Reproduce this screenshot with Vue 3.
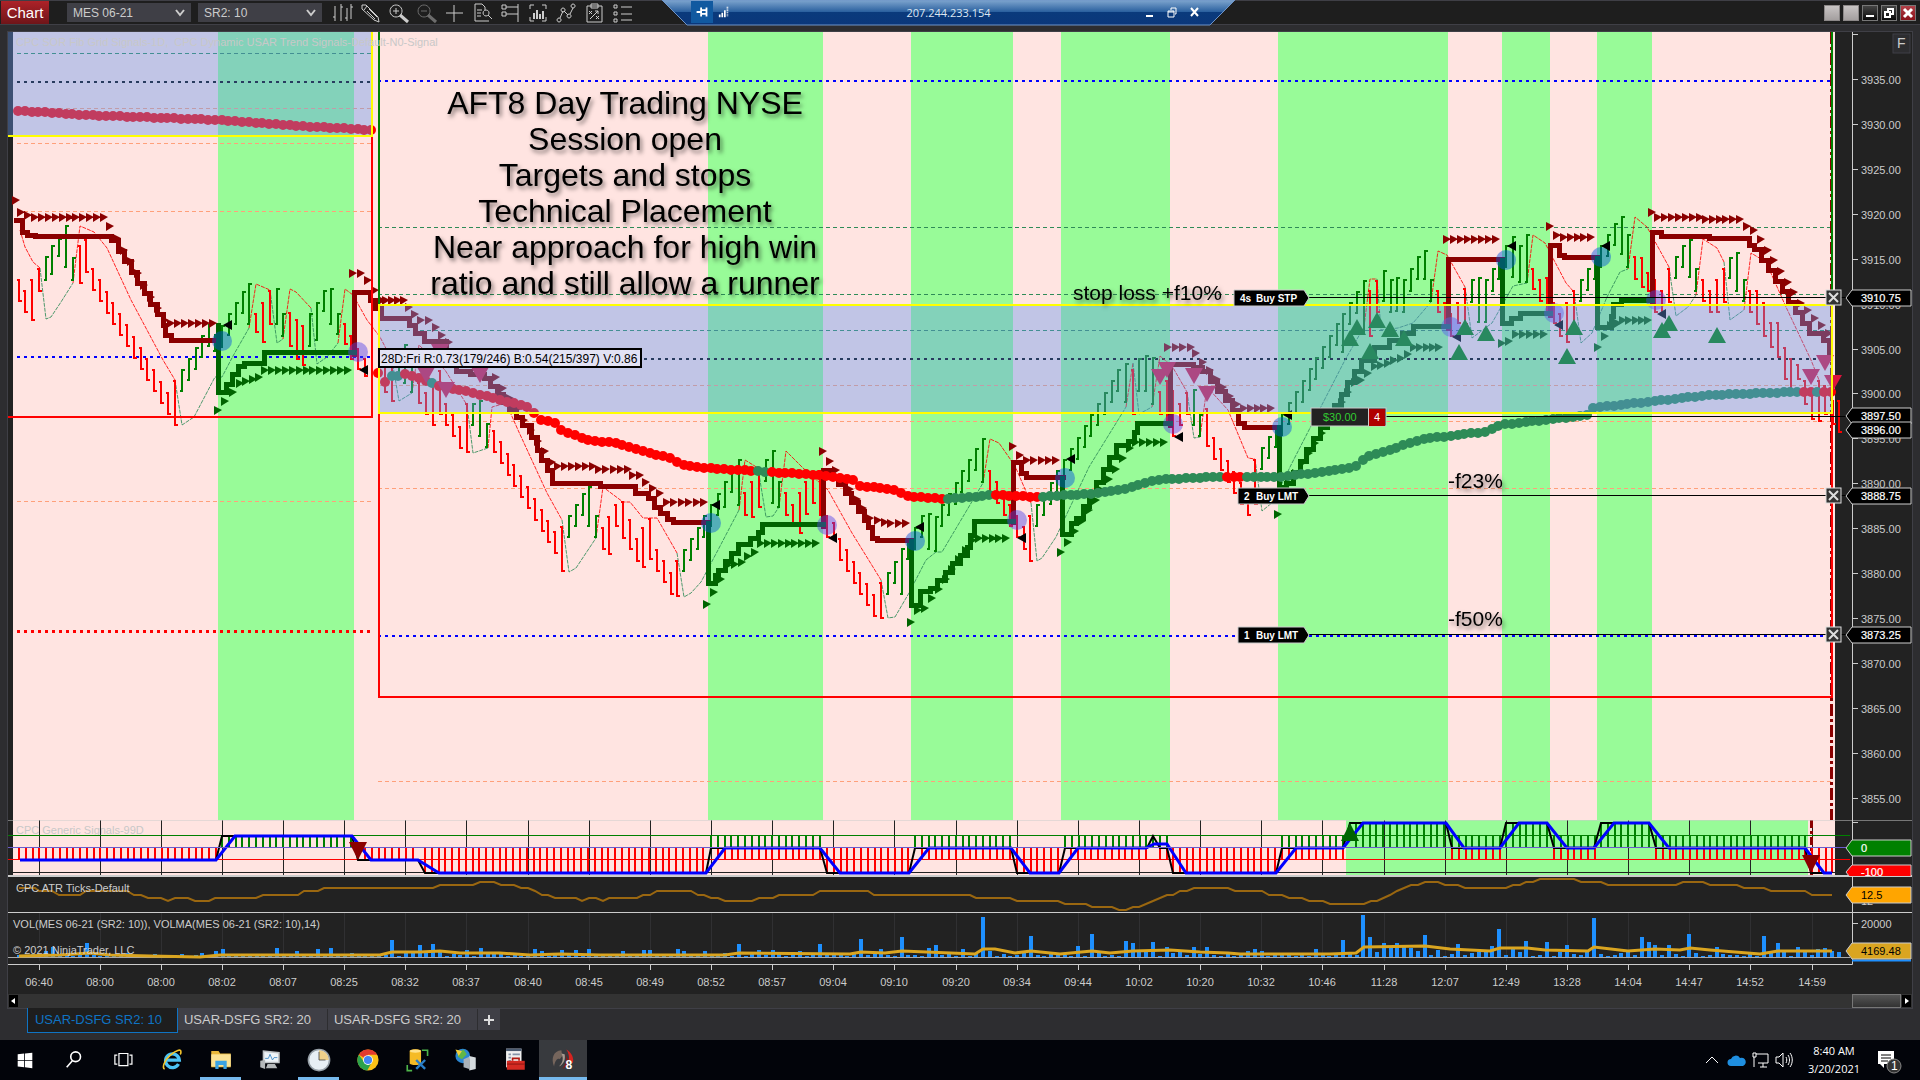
<script setup>
const PITCH = 6.79

const bands = [[218, 354], [708, 823], [911, 1013], [1061, 1170], [1278, 1448], [1502, 1550], [1597, 1652]]

// Single range bars: x, high, low
const redBars = [
  [19, 279, 302], [25, 290, 313], [32, 279, 321], [39, 268, 292], [80, 245, 284], [86, 239, 273], [175, 380, 426],
  [256, 313, 333], [263, 302, 343], [270, 290, 325], [290, 312, 347], [297, 319, 360], [303, 325, 366],
  [345, 323, 345], [351, 335, 360], [358, 348, 370], [365, 358, 377],
  [385, 350, 393], [392, 360, 402], [419, 382, 404], [426, 392, 415], [433, 380, 426], [440, 370, 415], [467, 403, 453], [562, 526, 572],
  [603, 527, 550], [609, 516, 555], [616, 504, 527], [623, 501, 539], [630, 519, 550], [637, 538, 562], [643, 527, 568],
  [650, 518, 560], [677, 560, 597], [745, 492, 516], [752, 481, 518], [759, 470, 508],
  [786, 492, 516], [793, 504, 527], [800, 492, 534], [806, 481, 515], [813, 472, 504], [820, 470, 516], [827, 515, 538], [834, 522, 540],
  [881, 582, 619], [1024, 526, 550], [1030, 515, 562], [1133, 369, 415], [1160, 391, 415], [1167, 380, 426], [1173, 390, 437],
  [1180, 403, 426], [1187, 392, 415], [1207, 408, 447], [1255, 459, 505],
  [1370, 290, 337], [1377, 280, 313], [1438, 290, 313], [1445, 302, 324], [1451, 313, 337], [1458, 302, 324], [1465, 288, 325],
  [1533, 268, 290], [1540, 279, 302], [1547, 277, 313], [1554, 302, 324], [1560, 313, 337], [1567, 302, 343], [1574, 290, 326],
  [1635, 256, 280], [1642, 257, 288], [1648, 272, 292], [1655, 279, 313], [1662, 290, 313], [1669, 268, 303],
  [1703, 279, 302], [1710, 290, 313], [1717, 279, 313], [1724, 268, 303], [1750, 290, 313], [1757, 290, 325], [1764, 302, 337],
  [1771, 322, 348], [1778, 322, 358], [1785, 347, 380], [1791, 358, 391], [1798, 364, 380], [1805, 380, 405], [1812, 390, 420],
  [1819, 380, 422], [1825, 385, 415], [1833, 400, 425], [1839, 400, 433]
]
const greenBars = [
  [46, 256, 281], [52, 245, 275], [59, 238, 257], [66, 225, 268], [73, 257, 281], [215, 334, 352], [222, 325, 348], [249, 283, 325],
  [277, 288, 325], [283, 313, 337], [310, 313, 347], [317, 302, 341], [324, 290, 312], [331, 288, 325], [338, 313, 335],
  [399, 350, 378], [405, 344, 384], [412, 360, 393], [473, 403, 426], [480, 400, 437], [487, 423, 448], [589, 486, 527], [596, 515, 538],
  [725, 481, 508], [732, 470, 493], [739, 459, 506], [766, 459, 482], [773, 450, 504], [779, 481, 508],
  [902, 548, 595], [908, 540, 560], [915, 527, 550], [922, 515, 538], [929, 513, 550], [936, 516, 552],
  [983, 438, 483], [1126, 363, 403], [1139, 358, 392], [1146, 355, 392], [1153, 357, 405], [1194, 389, 426], [1200, 414, 437],
  [1343, 313, 353], [1364, 280, 333], [1384, 270, 302], [1391, 279, 313], [1397, 277, 312], [1404, 279, 313], [1411, 268, 292],
  [1418, 256, 280], [1425, 250, 280], [1431, 279, 302], [1472, 279, 303], [1479, 277, 323], [1486, 279, 323], [1493, 268, 292],
  [1499, 257, 280], [1506, 245, 268], [1513, 236, 278], [1520, 245, 283], [1527, 234, 283],
  [1622, 216, 255], [1628, 234, 268], [1690, 239, 278], [1696, 268, 292], [1730, 257, 279], [1737, 252, 292], [1744, 279, 302]
]
// Steady runs: x, first high, bar count, direction
const redRuns = [[93, 268, 12, 1], [446, 403, 3, 1], [494, 430, 10, 1], [657, 549, 3, 1], [840, 538, 6, 1], [990, 470, 5, 1], [1214, 437, 6, 1]]
const greenRuns = [[182, 369, 5, -1], [229, 313, 3, -1], [569, 515, 3, -1], [684, 549, 6, -1], [888, 572, 2, -1], [942, 504, 6, -1],
  [1037, 504, 13, -1], [1262, 447, 12, -1], [1350, 302, 2, -1], [1581, 279, 6, -1], [1676, 256, 2, -1]]

function barPath(list, runs, dir) {
  const all = list.map(b => [...b, dir])
  for (const [x, top, n, d] of runs) {
    for (let k = 0; k < n; k++) {
      const t = Math.round(top + d * 11.25 * k)
      all.push([Math.round(x + PITCH * k), t, t + 23, d])
    }
  }
  return all.map(([x, hi, lo, d]) => {
    const open = d > 0 ? hi + 1 : lo - 1
    const close = d > 0 ? lo - 1 : hi + 1
    return `M${x} ${hi}V${lo}M${x - 2} ${open}h2M${x} ${close}h3`
  }).join('')
}
const redBarPath = barPath(redBars, redRuns, 1)
const greenBarPath = barPath(greenBars, greenRuns, -1)

// Trend steps: drawn horizontally first, then vertically
function steps(pts) {
  let d = `M${pts[0][0]} ${pts[0][1]}`
  for (const [x, y] of pts.slice(1)) d += `H${x}V${y}`
  return d
}
function stair(x0, y0, x1, y1) {
  const n = Math.max(1, Math.round((x1 - x0) / PITCH))
  return Array.from({ length: n + 1 }, (_, k) => [Math.round(x0 + (x1 - x0) * k / n), Math.round(y0 + (y1 - y0) * k / n)])
}
const redSteps = [
  [[16, 220], [22, 232], [27, 235], [35, 236], ...stair(111, 240, 163, 325), [165, 335], [171, 340], [216, 340]],
  [[354, 354], [354, 292], [370, 300], [375, 308], [381, 318], [409, 325], [415, 333], [424, 341], [446, 350], [450, 362], [456, 371], [470, 374],
    ...stair(484, 378, 522, 425), [531, 437], [537, 450], [541, 460], [547, 470], [552, 483], [600, 486], [635, 493], [648, 498], [654, 507], [660, 513], [667, 519], [673, 522], [708, 522]],
  [[823, 526], [823, 470], [832, 477], ...stair(838, 484, 864, 520), [868, 527], [872, 538], [877, 540], [911, 540]],
  [[1013, 522], [1013, 462], [1021, 473], [1026, 477], [1063, 477]],
  [[1170, 425], [1170, 364], [1193, 367], ...stair(1202, 371, 1232, 410), [1238, 423], [1244, 427], [1278, 427]],
  [[1448, 328], [1448, 259], [1502, 259]],
  [[1550, 315], [1550, 245], [1559, 255], [1564, 257], [1597, 257]],
  [[1652, 302], [1652, 232], [1661, 236], [1709, 238], [1749, 245], ...stair(1754, 249, 1809, 333), [1823, 340], [1829, 358]]
].map(steps).join('')
const greenSteps = [
  [[218, 325], [218, 392], [226, 384], [232, 374], [238, 366], [244, 363], [264, 352], [354, 352]],
  [[708, 523], [708, 583], [715, 575], ...stair(718, 570, 738, 544), [750, 538], [758, 532], [762, 524], [823, 524]],
  [[911, 541], [911, 605], [920, 591], ...stair(930, 588, 967, 547), [970, 535], [974, 521], [1013, 521]],
  [[1062, 478], [1062, 534], [1071, 523], ...stair(1076, 518, 1116, 445), [1128, 441], [1134, 432], [1137, 423], [1170, 423]],
  [[1279, 427], [1279, 487], ...stair(1286, 483, 1361, 360), [1374, 347], [1389, 340], [1402, 333], [1413, 326], [1448, 326]],
  [[1502, 260], [1502, 323], [1511, 318], [1520, 313], [1550, 313]],
  [[1597, 258], [1597, 327], [1611, 316], [1613, 304], [1621, 300], [1652, 300]]
].map(steps).join('')

// Arrow trails: x0, y0, x1, y1, sampled once per bar
const redTrail = [
  [15, 200, 15, 200], [20, 212, 27, 215], [34, 217, 103, 217], [109, 226, 164, 320], [170, 323, 212, 323],
  [352, 273, 360, 273], [367, 280, 381, 300], [385, 300, 403, 300], [408, 307, 420, 320], [428, 320, 448, 342], [495, 377, 551, 462],
  [557, 466, 592, 466], [598, 469, 627, 469], [632, 475, 639, 475], [645, 482, 659, 493], [666, 502, 703, 502],
  [822, 451, 869, 518], [877, 520, 884, 522], [890, 523, 905, 523], [1012, 446, 1019, 455], [1026, 460, 1055, 460],
  [1167, 347, 1190, 347], [1195, 353, 1236, 404], [1243, 408, 1270, 408], [1446, 239, 1495, 239], [1549, 226, 1556, 235], [1563, 237, 1590, 237],
  [1651, 212, 1651, 212], [1657, 217, 1699, 217], [1705, 219, 1739, 219], [1746, 226, 1753, 230], [1760, 239, 1800, 303], [1807, 310, 1828, 333]
]
const greenTrail = [
  [217, 410, 239, 383], [245, 381, 258, 377], [264, 370, 347, 370], [706, 604, 720, 579], [727, 565, 741, 562], [747, 556, 754, 552], [760, 543, 815, 543],
  [910, 622, 917, 610], [924, 608, 972, 540], [978, 538, 1005, 538], [1060, 552, 1129, 448], [1135, 442, 1163, 442],
  [1277, 514, 1277, 514], [1288, 483, 1354, 382], [1360, 380, 1374, 366], [1380, 365, 1400, 358], [1407, 354, 1407, 354], [1413, 347, 1438, 347],
  [1501, 343, 1508, 341], [1515, 334, 1543, 334], [1597, 347, 1610, 325], [1617, 323, 1617, 323], [1622, 320, 1647, 320]
]
function trailPath(segs) {
  return segs.map(([x0, y0, x1, y1]) => {
    const n = Math.round((x1 - x0) / PITCH)
    return Array.from({ length: n + 1 }, (_, k) => {
      const f = n ? k / n : 0
      return `M${Math.round(x0 + (x1 - x0) * f) - 3} ${Math.round(y0 + (y1 - y0) * f) - 4}l8 4l-8 5z`
    }).join('')
  }).join('')
}
const redArrows = trailPath(redTrail)
const greenArrows = trailPath(greenTrail)

// Moving average dots
function interpolate(pts, x) {
  for (let i = 1; i < pts.length; i++) {
    if (x <= pts[i][0]) {
      const [a, b] = pts[i - 1]
      const [c, d] = pts[i]
      return b + (d - b) * (x - a) / (c - a)
    }
  }
  return pts[pts.length - 1][1]
}
const maLeft = [[18, 111], [39, 112], [82, 115], [216, 120], [300, 126], [373, 130]]
const maRight = [[378, 373], [385, 382], [392, 376], [399, 376], [406, 374], [426, 381], [440, 386], [469, 392], [529, 407], [541, 420], [555, 423],
  [561, 430], [588, 440], [616, 443], [640, 450], [669, 458], [685, 466], [722, 469], [768, 472], [820, 475], [856, 480], [860, 486], [897, 490],
  [905, 496], [946, 499], [995, 495], [1038, 497], [1089, 494], [1122, 490], [1154, 480], [1211, 477], [1280, 477], [1337, 470], [1358, 466],
  [1364, 458], [1423, 439], [1484, 432], [1500, 425], [1590, 415], [1593, 408], [1647, 402], [1709, 395], [1798, 392], [1834, 392]]
const maGreen = [[391, 401], [430, 436], [754, 769], [944, 994], [1037, 1222], [1244, 1803], [1816, 1822]]
const dots = []
for (let x = 18; x < 376; x += PITCH) dots.push({ x: Math.round(x), y: Math.round(interpolate(maLeft, x)), c: '#ff0000' })
for (let x = 378; x < 1836; x += PITCH) {
  const green = maGreen.some(([a, b]) => x >= a && x <= b)
  dots.push({ x: Math.round(x), y: Math.round(interpolate(maRight, x)), c: green ? '#2e8b57' : '#ff0000' })
}

// Thin stop curves: each starts where the previous one ended
const curves = [
  ['r', 20, 230, 25, 247, 33, 262, 40, 268], ['g', 46, 319, 51, 317, 61, 302, 73, 283], ['r', 80, 226, 94, 232, 107, 248, 131, 300, 163, 360, 175, 380],
  ['g', 182, 425, 194, 417, 204, 398, 215, 377, 222, 377, 233, 356, 249, 328], ['r', 256, 284, 270, 290], ['g', 277, 343, 283, 339],
  ['r', 290, 289, 296, 292, 311, 308], ['g', 317, 364, 327, 357, 338, 343], ['r', 345, 289, 353, 295, 367, 320, 380, 337, 392, 360],
  ['g', 399, 401, 412, 393], ['r', 419, 345, 445, 370, 467, 405], ['g', 473, 453, 488, 448], ['r', 492, 407, 506, 403, 518, 430, 547, 493, 562, 520],
  ['g', 569, 572, 576, 568, 588, 550, 596, 538], ['r', 603, 487, 623, 502, 630, 502, 643, 518, 657, 518, 677, 553],
  ['g', 684, 597, 691, 593, 701, 582, 718, 550, 739, 510], ['r', 745, 460, 758, 468], ['g', 766, 517, 773, 516, 779, 507],
  ['r', 786, 451, 803, 468, 828, 490, 852, 533, 881, 580], ['g', 888, 618, 895, 617, 909, 593, 926, 560, 936, 552, 942, 552, 983, 483],
  ['r', 990, 439, 999, 443, 1015, 466, 1031, 503], ['g', 1037, 561, 1042, 558, 1056, 537, 1089, 467, 1126, 407], ['r', 1133, 363], ['g', 1139, 414, 1152, 407],
  ['r', 1160, 356, 1172, 366, 1187, 392], ['g', 1194, 438, 1200, 437], ['r', 1207, 387, 1228, 410, 1248, 458, 1255, 459],
  ['g', 1262, 511, 1273, 502, 1292, 463, 1345, 360, 1364, 327], ['r', 1370, 279, 1377, 279], ['g', 1381, 330, 1398, 328, 1413, 323, 1431, 302],
  ['r', 1438, 251, 1447, 255, 1465, 287], ['g', 1472, 338, 1492, 323, 1513, 286, 1527, 283], ['r', 1533, 235, 1545, 243, 1566, 283, 1574, 292],
  ['g', 1581, 343, 1592, 333, 1607, 297, 1620, 272, 1628, 269], ['r', 1635, 217, 1647, 227, 1669, 267], ['g', 1676, 316, 1688, 307, 1696, 295],
  ['r', 1703, 239, 1717, 248, 1724, 262], ['g', 1730, 320, 1744, 310], ['r', 1751, 253, 1766, 262, 1786, 307, 1811, 360, 1819, 380]
]
const curvePaths = curves.map((c, i) => {
  const prev = i ? curves[i - 1].slice(-2) : c.slice(1, 3)
  return { c: c[0] === 'r' ? '#ff0000' : '#2e8b57', d: `M${prev.join(' ')}L${c.slice(1).join(' ')}` }
})

const circles = [[222, 341], [358, 352], [711, 523], [827, 525], [915, 541], [1017, 520], [1065, 478], [1173, 424], [1282, 427], [1451, 327], [1506, 260], [1554, 313], [1601, 257], [1656, 300]]
const entries = [[228, 325], [364, 370], [716, 505], [833, 538], [920, 527], [1022, 538], [1071, 459], [1179, 437], [1288, 415], [1457, 337], [1512, 246], [1559, 325], [1606, 246], [1662, 314]]
const ups = [[1350, 338], [1357, 327], [1377, 320], [1370, 351], [1390, 329], [1404, 338], [1459, 352], [1465, 327], [1486, 333], [1567, 356], [1574, 327], [1662, 330], [1669, 323], [1717, 335]]
const downs = [[426, 375], [446, 390], [480, 375], [440, 352], [1160, 377], [1167, 370], [1194, 376], [1207, 394], [1811, 377], [1825, 363], [1833, 383]]
const entryPath = entries.map(([x, y]) => `M${x - 5} ${y}l9 -5v10z`).join('')
const upPath = ups.map(([x, y]) => `M${x - 9} ${y + 8}h18l-9 -16z`).join('')
const downPath = downs.map(([x, y]) => `M${x - 9} ${y - 8}h18l-9 16z`).join('')

// Horizontal levels: x0, x1, y, kind
const levels = [
  [17, 372, 53, 'sea'], [17, 372, 82, 'mid'], [17, 372, 108, 'coral'], [17, 372, 143, 'coral'], [17, 372, 211, 'coral'], [17, 372, 357, 'blue'],
  [17, 372, 501, 'coral'], [17, 374, 631, 'stop'],
  [378, 1831, 81, 'blue'], [378, 1831, 227, 'sea'], [378, 1831, 294, 'sea'], [378, 1831, 330, 'sea'], [378, 1831, 359, 'mid'],
  [378, 1831, 385, 'coral'], [378, 1831, 421, 'coral'], [378, 1831, 488, 'coral'], [378, 1831, 636, 'blue'], [378, 1831, 781, 'coral']
]

const prices = Array.from({ length: 17 }, (_, k) => ({ y: Math.round(79.7 + 44.97 * k), label: (3935 - 5 * k).toFixed(2) }))
const priceTags = [{ y: 298, t: '3910.75' }, { y: 416, t: '3897.50' }, { y: 430, t: '3896.00' }, { y: 496, t: '3888.75' }, { y: 635, t: '3873.25' }]
const orders = [{ x: 1234, y: 298, q: '4s', t: 'Buy STP' }, { x: 1238, y: 496, q: '2', t: 'Buy LMT' }, { x: 1238, y: 635, q: '1', t: 'Buy LMT' }]
const note = ['AFT8 Day Trading NYSE', 'Session open', 'Targets and stops', 'Technical Placement', 'Near approach for high win', 'ratio and still allow a runner']

const times = ['06:40', '08:00', '08:00', '08:02', '08:07', '08:25', '08:32', '08:37', '08:40', '08:45', '08:49', '08:52', '08:57', '09:04', '09:10', '09:20',
  '09:34', '09:44', '10:02', '10:20', '10:32', '10:46', '11:28', '12:07', '12:49', '13:28', '14:04', '14:47', '14:52', '14:59']
  .map((t, k) => ({ t, x: Math.round(38.5 + 61.14 * k) }))

// Signal histogram: x0, x1, far edge
const redHist = [[19, 216, 859], [365, 418, 859], [425, 704, 872], [718, 820, 859], [827, 908, 872], [922, 1010, 859], [1017, 1058, 872], [1071, 1146, 859],
  [1160, 1167, 859], [1173, 1275, 872], [1282, 1343, 859], [1452, 1499, 859], [1554, 1594, 859], [1656, 1806, 859], [1812, 1833, 872]]
const greenHist = [[222, 352, 835], [711, 820, 835], [915, 1010, 835], [1065, 1167, 835], [1282, 1343, 835], [1356, 1446, 823], [1452, 1499, 835],
  [1506, 1548, 823], [1554, 1594, 835], [1601, 1649, 823], [1656, 1806, 835]]
function histPath(list) {
  let d = ''
  for (const [a, b, y] of list) for (let x = a; x <= b + 1; x += PITCH) d += `M${Math.round(x)} 847V${y}`
  return d
}
const redHistPath = histPath(redHist)
const greenHistPath = histPath(greenHist)
const fastLine = '20,860 216,860 222,836 352,836 358,860 418,860 425,873 706,873 711,848 820,848 827,873 909,873 915,848 1011,848 1017,873 1059,873 1065,848 1147,848 1153,836 1160,848 1167,848 1173,873 1276,873 1282,848 1343,848 1350,823 1446,823 1452,848 1500,848 1506,823 1547,823 1554,848 1594,848 1601,823 1649,823 1656,848 1805,848 1811,873 1832,873'
const slowLine = '20,860 216,860 235,836 352,836 371,860 418,860 439,873 706,873 725,848 820,848 840,873 909,873 929,848 1011,848 1030,873 1059,873 1078,848 1146,848 1154,844 1167,844 1186,873 1276,873 1296,848 1343,848 1363,823 1446,823 1464,848 1500,848 1519,823 1547,823 1567,848 1594,848 1614,823 1649,823 1669,848 1805,848 1824,873 1832,873'

const atrLine = '19,888 35,888 39,891 52,891 59,895 80,895 86,891 127,891 134,895 141,895 148,898 161,898 168,901 175,898 188,898 195,901 209,901 215,898 256,898 263,895 298,895 304,891 318,891 324,888 433,888 440,885 473,885 480,882 494,882 501,885 514,885 521,888 528,888 535,891 542,895 548,895 555,898 576,898 582,901 589,898 596,898 603,901 609,898 637,898 643,895 650,895 657,891 691,891 698,895 704,895 711,898 718,898 725,901 752,901 759,898 773,898 779,895 813,895 820,891 868,891 874,895 970,895 976,898 1010,898 1017,901 1058,901 1065,904 1086,904 1092,907 1112,907 1119,910 1126,910 1133,907 1139,907 1153,901 1167,895 1173,895 1180,891 1187,891 1194,888 1228,888 1235,891 1262,891 1269,895 1282,895 1289,898 1302,898 1309,901 1323,901 1330,904 1364,904 1371,901 1377,901 1390,895 1397,891 1411,885 1418,885 1425,882 1438,882 1445,885 1458,885 1465,888 1506,888 1513,885 1520,885 1526,882 1533,882 1540,879 1574,879 1581,882 1601,882 1608,885 1676,885 1683,882 1703,882 1710,885 1737,885 1744,888 1764,888 1771,891 1805,891 1812,895 1832,895'

// Volume by bar position; quiet bars fall back to the small cycle
const tall = { 46: 6, 52: 10, 86: 14, 215: 6, 222: 8, 277: 9, 297: 6, 317: 8, 331: 9, 392: 17, 406: 6, 412: 6, 419: 12, 433: 13, 440: 6, 467: 7, 480: 9, 487: 5, 494: 4,
  535: 8, 542: 6, 562: 7, 576: 7, 589: 8, 623: 6, 643: 7, 650: 7, 677: 8, 684: 6, 704: 6, 739: 13, 759: 7, 773: 7, 800: 6, 820: 13, 861: 18, 881: 8, 902: 20, 929: 9,
  936: 12, 963: 8, 983: 40, 990: 6, 1031: 21, 1078: 11, 1092: 23, 1126: 16, 1133: 14, 1139: 7, 1146: 7, 1153: 15, 1167: 10, 1180: 5, 1194: 10, 1207: 10, 1248: 6,
  1255: 8, 1262: 6, 1316: 8, 1343: 17, 1364: 42, 1370: 20, 1377: 5, 1384: 14, 1391: 9, 1397: 14, 1404: 10, 1411: 9, 1418: 6, 1425: 22, 1438: 7, 1459: 13, 1479: 5,
  1486: 5, 1493: 11, 1499: 28, 1513: 9, 1520: 5, 1527: 16, 1547: 15, 1560: 5, 1567: 12, 1588: 6, 1594: 39, 1628: 6, 1642: 20, 1649: 15, 1655: 12, 1669: 12, 1690: 23,
  1717: 10, 1764: 21, 1771: 6, 1778: 14, 1785: 5, 1798: 10, 1805: 6, 1819: 8, 1825: 9, 1832: 6, 1839: 5 }
const quiet = [2, 1, 3, 1, 2, 4, 1, 2, 1, 3, 2]
const tallByIndex = {}
for (const [x, h] of Object.entries(tall)) tallByIndex[Math.round((x - 19) / PITCH)] = h
const volumes = Array.from({ length: 269 }, (_, i) => ({ x: Math.round(17 + PITCH * i), h: tallByIndex[i] ?? quiet[i % 11] }))
const volMa = '19,956 60,955 90,953 110,955 150,956 200,957 220,955 380,955 392,952 420,952 440,951 460,953 500,953 530,955 560,954 600,955 725,955 739,953 850,954 861,952 885,953 902,951 975,954 983,949 995,949 1015,953 1031,951 1060,954 1092,951 1110,953 1133,951 1170,950 1200,952 1228,953 1240,954 1330,954 1356,953 1364,947 1425,946 1450,949 1490,951 1500,948 1527,948 1545,950 1588,951 1594,947 1628,951 1655,949 1680,950 1690,948 1710,950 1760,954 1778,951 1832,951'

const tools = [
  { n: 'Bar style', d: 'M4 4v15M2 15h2M10 2v17M10 5h2M16 6v13M14 16h2M20 2v15M20 5h2' },
  { n: 'Draw', d: 'M3 3l4 0l12 12l1 5l-5 -2l-12 -11zM5 8l3 -4M8 9l8 8M10 7l8 8' },
  { n: 'Zoom in', d: 'M9 3a6 6 0 1 0 .1 0M9 6v6M6 9h6', h: 'M13 13l8 7' },
  { n: 'Zoom out', d: 'M9 3a6 6 0 1 0 .1 0M6 9h6', h: 'M13 13l8 7', off: true },
  { n: 'Crosshair', d: 'M11 3v17M3 11h17' },
  { n: 'Data box', d: 'M14 8v-3l-3 -3h-7v17h14M6 8h5M6 11h4M6 14h4M15 8a3 3 0 1 0 .1 0M17 13l4 4' },
  { n: 'Chart trader', d: 'M3 3h4v4h-4zM3 10h4v4h-4zM7 5h12M7 12h12M19 2v18' },
  { n: 'Data series', d: 'M3 7v-4h4M15 3h4v4M19 15v4h-4M7 19h-4v-4', h: 'M7 11v6M10 8v9M13 12v5M16 9v8' },
  { n: 'Indicators', d: 'M4 16a2 2 0 1 0 .1 0M8 6a2 2 0 1 0 .1 0M14 12a2 2 0 1 0 .1 0M18 2a2 2 0 1 0 .1 0M5 16l3 -7M9 9l4 4M15 12l3 -6' },
  { n: 'Strategies', d: 'M4 4h15v16h-15zM8 2h7v4h-7zM6 9l3 3M9 9l-3 3M13 14l3 3M16 14l-3 3M7 17l3 -3l5 -5M12 9h3v3' },
  { n: 'Properties', d: 'M3 3h3v3h-3zM3 10h3v3h-3zM3 17h3v3h-3zM10 5h11M10 12h11M10 18h11' }
]
</script>

<template>
  <div class="screen">
    <header class="toolbar">
      <button class="menu">Chart</button>
      <label class="pick"><select aria-label="Instrument"><option>MES 06-21</option></select>
        <svg viewBox="0 0 10 8"><path d="M1 1l4 5l4 -5" /></svg></label>
      <label class="pick"><select aria-label="Interval"><option>SR2: 10</option></select>
        <svg viewBox="0 0 10 8"><path d="M1 1l4 5l4 -5" /></svg></label>
      <nav class="tools">
        <button v-for="t in tools" :key="t.n" :aria-label="t.n" :class="{ off: t.off }">
          <svg viewBox="0 0 22 22"><path :d="t.d" /><path v-if="t.h" :d="t.h" class="heavy" /></svg>
        </button>
      </nav>
      <div class="wins">
        <button class="blank" aria-label="Link instrument"></button>
        <button class="blank" aria-label="Link interval"></button>
        <button aria-label="Minimize"><svg viewBox="0 0 14 14"><path d="M3 10h8" stroke-width="2" /></svg></button>
        <button aria-label="Restore"><svg viewBox="0 0 14 14"><path d="M6 6V3h5v5H8M3 6h5v5H3z" stroke-width="2" /></svg></button>
        <button class="shut" aria-label="Close"><svg viewBox="0 0 14 14"><path d="M3 3l8 8M11 3l-8 8" stroke-width="3" /></svg></button>
      </div>
    </header>

    <div class="remote">
      <svg class="shape" viewBox="0 0 573 26" preserveAspectRatio="none">
        <defs>
          <linearGradient id="rg" x1="0" y1="0" x2="0" y2="1">
            <stop offset="0" stop-color="#7fa6cf" /><stop offset=".46" stop-color="#2d62a0" /><stop offset=".48" stop-color="#0a3a7c" /><stop offset="1" stop-color="#0b377a" />
          </linearGradient>
        </defs>
        <path d="M0 0H573L548 25H25z" fill="url(#rg)" stroke="#6f94c8" />
      </svg>
      <div class="remote-row">
        <button class="pin" aria-label="Pin"><svg viewBox="0 0 20 20"><path d="M4 10h5M9 5v10M15 5v10M9 8h6M9 12h6" stroke-width="2" /></svg></button>
        <svg class="sig" viewBox="0 0 12 14"><path d="M1 10v3M4 8v5M7 5v8" stroke-width="2" /><path d="M10 1v12" stroke-width="2" stroke-dasharray="1 1" /></svg>
        <span>207.244.233.154</span>
        <button aria-label="Minimize session"><svg viewBox="0 0 12 12"><path d="M3 10h7" stroke-width="2" /></svg></button>
        <button aria-label="Restore session"><svg viewBox="0 0 12 12"><path d="M2 5h6v6h-6zM2 6h6M5 4V2h5v6h-1" /></svg></button>
        <button aria-label="Close session"><svg viewBox="0 0 12 12"><path d="M2 2l7 8M9 2l-7 8" stroke-width="2" /></svg></button>
      </div>
    </div>

    <main class="frame">
      <svg class="panel" viewBox="8 32 1904 788">
        <rect x="8" y="32" width="1904" height="788" fill="#222" />
        <rect x="13" y="32" width="1822" height="788" fill="#ffe4e1" />
        <rect v-for="b in bands" :key="b[0]" :x="b[0]" y="32" :width="b[1] - b[0]" height="788" fill="#98fb98" />
        <g class="crisp">
          <path v-for="(l, i) in levels" :key="i" :class="['lv', l[3]]" :d="`M${l[0]} ${l[2]}H${l[1]}`" />
          <path d="M1831 32V820" stroke="#8b0000" stroke-width="3" stroke-dasharray="12 3 3 3" />
        </g>
        <path v-for="(c, i) in curvePaths" :key="'c' + i" :d="c.d" :stroke="c.c" class="curve" />
        <path :d="redBarPath" class="bars" stroke="#ff0000" />
        <path :d="greenBarPath" class="bars" stroke="#008000" />
        <path :d="redSteps" class="steps" stroke="#8b0000" />
        <path :d="greenSteps" class="steps" stroke="#006400" />
        <path :d="redArrows" fill="#8b0000" />
        <path :d="greenArrows" fill="#006400" />
        <circle v-for="(d, i) in dots" :key="'d' + i" :cx="d.x" :cy="d.y" r="5" :fill="d.c" />
        <circle v-for="(c, i) in circles" :key="'o' + i" :cx="c[0]" :cy="c[1]" r="10" :fill="i % 2 ? '#5040e8' : '#0050e0'" fill-opacity=".45" />
        <path :d="entryPath" fill="#000" />
        <path :d="upPath" fill="#008000" />
        <path :d="downPath" fill="#dc143c" />
        <rect x="8" y="32" width="364" height="104" fill="#6495ed" fill-opacity=".4" />
        <rect x="379" y="305" width="1453" height="108" fill="#6495ed" fill-opacity=".4" />
        <g class="box">
          <path d="M379 32V305M1832 32V305" stroke="#008000" />
          <path d="M372 136V417H8M379 413V697H1832V413" stroke="#ff0000" />
          <path d="M8 136H372V32M379 305H1832V413H379z" stroke="#ffff00" />
        </g>
        <text x="16" y="46" class="ttl">CPC SOR Fib Grid Signals-1D,&#160; CPC Dynamic USAR Trend Signals-Default-N0-Signal</text>

        <g class="orders">
          <path d="M1309 297.500H1846M1386 416.500H1846M1309 495.500H1846M1309 634.500H1846" stroke="#000" />
          <g v-for="o in orders" :key="o.t + o.y">
            <path :d="`M${o.x} ${o.y - 8}H1304L1309 ${o.y}L1304 ${o.y + 8}H${o.x}z`" fill="#000" stroke="#ccc" />
            <text :x="o.x + 6" :y="o.y + 4">{{ o.q }}</text>
            <text x="1256" :y="o.y + 4">{{ o.t }}</text>
            <rect x="1826" :y="o.y - 8" width="15" height="15" fill="#333" stroke="#ddd" />
            <path :d="`M1829 ${o.y - 5}l9 9M1838 ${o.y - 5}l-9 9`" stroke="#ddd" stroke-width="2" />
          </g>
          <rect x="1311" y="408" width="75" height="18" fill="#222" stroke="#ccc" />
          <rect x="1369" y="409" width="16" height="17" fill="#b00000" />
          <path d="M1368.500 408v18" stroke="#ccc" />
          <text x="1323" y="421" class="pnl">$30.00</text>
          <text x="1374" y="421" class="qty">4</text>
        </g>

        <rect x="379" y="349" width="262" height="18" fill="#e2e2f4" stroke="#000" stroke-width="2" />
        <text x="381" y="363" class="tip">28D:Fri R:0.73(179/246) B:0.54(215/397) V:0.86</text>

        <g class="note">
          <text v-for="(n, i) in note" :key="n" x="625" :y="114 + 36 * i">{{ n }}</text>
        </g>
        <g class="fib">
          <text x="1073" y="300">stop loss +f10%</text>
          <text x="1448" y="488">-f23%</text>
          <text x="1448" y="626">-f50%</text>
        </g>

        <path d="M1852.500 32V820M1852 34.500h6" stroke="#ccc" fill="none" />
        <g class="axis">
          <g v-for="p in prices" :key="p.label">
            <path :d="`M1852 ${p.y - .5}h6`" stroke="#ccc" />
            <text x="1861" :y="p.y + 4">{{ p.label }}</text>
          </g>
        </g>
        <g class="axis tag">
          <g v-for="p in priceTags" :key="p.t">
            <path :d="`M1846 ${p.y}L1852 ${p.y - 8}H1911V${p.y + 8}H1852z`" fill="#000" stroke="#ccc" />
            <text x="1861" :y="p.y + 4">{{ p.t }}</text>
          </g>
        </g>
        <rect x="1893" y="34" width="17" height="19" fill="#2d2d30" stroke="#3f3f46" />
        <text x="1897" y="48" class="fix">F</text>
      </svg>

      <svg class="panel" viewBox="8 820 1904 56">
        <rect x="8" y="820" width="1904" height="56" fill="#222" />
        <rect x="13" y="820" width="1822" height="56" fill="#ffe4e1" />
        <rect x="1346" y="820" width="462" height="56" fill="#98fb98" />
        <text x="16" y="834" class="ttl">CPC Generic Signals-99D</text>
        <g class="crisp">
          <path v-for="t in times" :key="'v' + t.x" :d="`M${t.x} 820v56`" stroke="#222" />
          <path d="M8 872H1850" stroke="#222" />
          <path d="M1811 820V876" stroke="#8b0000" stroke-width="3" stroke-dasharray="8 3 3 3" />
          <path :d="redHistPath" stroke="#ff0000" stroke-width="2" />
          <path :d="greenHistPath" stroke="#008000" stroke-width="2" />
          <path d="M8 835H1850" stroke="#008000" />
          <path d="M8 859H1850" stroke="#ff0000" />
        </g>
        <polyline :points="fastLine" stroke="#000" stroke-width="2" fill="none" />
        <polyline :points="slowLine" stroke="#0000ff" stroke-width="3" fill="none" />
        <path d="M8 847H1850" stroke="#6a5acd" class="crisp" />
        <path d="M349 842h18l-9 18zM1802 855h18l-9 18z" fill="#8b0000" />
        <path d="M1341 841h18l-9 -18z" fill="#006400" />
        <path d="M8 819.500H1912M8 876H1912" stroke="#ccc" stroke-width="2" />
        <path d="M1852.500 820V876M1852 822.500h6" stroke="#ccc" />
        <g class="axis tag">
          <path d="M1846 848L1852 840H1911V856H1852z" fill="#008000" stroke="#ccc" />
          <text x="1861" y="852">0</text>
          <path d="M1846 872L1852 865H1911V880H1852z" fill="#f00" stroke="#ccc" />
          <text x="1861" y="876">-100</text>
        </g>
      </svg>

      <svg class="panel" viewBox="8 876 1904 36">
        <rect x="8" y="876" width="1904" height="36" fill="#222" />
        <polyline :points="atrLine" stroke="#9a6710" stroke-width="2" fill="none" />
        <text x="16" y="892" class="lite">CPC ATR Ticks-Default</text>
        <path d="M8 876.500H1912M1852.500 876V912" stroke="#ccc" />
        <text x="1861" y="905" class="lite">12</text>
        <path d="M1846 895L1852 887H1911V903H1852z" fill="#ffa500" stroke="#ccc" />
        <text x="1861" y="899" class="dark">12.5</text>
      </svg>

      <svg class="panel" viewBox="8 912 1904 82">
        <rect x="8" y="912" width="1904" height="82" fill="#222" />
        <g class="crisp">
          <path v-for="t in times" :key="'w' + t.x" :d="`M${t.x} 912v49`" stroke="#303032" />
          <path d="M8 957.500H1850" stroke="#aaa" />
        </g>
        <rect v-for="v in volumes" :key="v.x" :x="v.x" :y="957 - v.h" width="4" :height="v.h" fill="#1e90ff" />
        <polyline :points="volMa" stroke="#daa520" stroke-width="3" fill="none" />
        <text x="13" y="928" class="lite">VOL(MES 06-21 (SR2: 10)), VOLMA(MES 06-21 (SR2: 10),14)</text>
        <text x="13" y="954" class="lite">© 2021 NinjaTrader, LLC</text>
        <path d="M8 912.500H1912M8 964.500H1852.500V912M1852 923.500h6" stroke="#ccc" fill="none" />
        <text x="1861" y="928" class="lite">20000</text>
        <path d="M1852 960.500H1911" stroke="#1e90ff" stroke-width="2" />
        <path d="M1846 951L1852 943H1911V959H1852z" fill="#daa520" stroke="#ccc" />
        <text x="1861" y="955" class="dark">4169.48</text>
        <g class="time">
          <g v-for="t in times" :key="'t' + t.x">
            <path :d="`M${t.x + .5} 965v5`" stroke="#ccc" />
            <text :x="t.x" y="986">{{ t.t }}</text>
          </g>
        </g>
      </svg>

      <div class="scroll">
        <button aria-label="Scroll left"><svg viewBox="0 0 9 12"><path d="M6 3v6l-4 -3z" /></svg></button>
        <span class="track"></span>
        <span class="thumb"></span>
        <button aria-label="Scroll right"><svg viewBox="0 0 9 12"><path d="M3 3v6l4 -3z" /></svg></button>
      </div>
    </main>

    <nav class="tabs">
      <button class="tab on">USAR-DSFG SR2: 10</button>
      <button class="tab">USAR-DSFG SR2: 20</button>
      <button class="tab">USAR-DSFG SR2: 20</button>
      <button class="tab add" aria-label="Add tab"><svg viewBox="0 0 12 12"><path d="M6 1v10M1 6h10" /></svg></button>
    </nav>

    <footer class="taskbar">
      <button aria-label="Start"><svg viewBox="0 0 32 32"><path fill="#fff" d="M7 9l8-1v8H7zM16 8l9-1v9h-9zM7 17h8v8l-8-1zM16 17h9v9l-9-1z" /></svg></button>
      <button aria-label="Search"><svg viewBox="0 0 32 32" fill="none" stroke="#fff" stroke-width="2"><circle cx="18" cy="12" r="6" /><path d="M14 17l-7 8" /></svg></button>
      <button aria-label="Task view"><svg viewBox="0 0 32 32" fill="none" stroke="#fff"><path d="M11 8h11v15H11zM9 10H6v11h3M24 10h3v11h-3" stroke-width="1.500" /></svg></button>
      <button aria-label="Internet Explorer"><svg viewBox="0 0 32 32" fill="none"><path d="M24 21a8.500 8.500 0 1 1 1-5H10" stroke="#4cc3f5" stroke-width="4" /><path d="M7 27c-4-1 0-11 7-17s13-8 13-4c0 1 0 2-1 3" stroke="#f5c52c" stroke-width="2" /></svg></button>
      <button class="run" aria-label="File Explorer"><svg viewBox="0 0 32 32"><path fill="#e8b73a" d="M4 5h9l2 3h13v17H4z" /><path fill="#fbe294" d="M4 9h24v15H4z" /><path fill="#3aa3e3" d="M9 17h14v10h-4v-5h-6v5H9z" /></svg></button>
      <button aria-label="Performance Monitor"><svg viewBox="0 0 32 32"><path fill="#bfc3c6" d="M7 4l21 2v14l-21 0z" /><path fill="#eef4f8" d="M9 6l17 2v10H9z" /><path d="M10 14l4 0l2-5l3 7l2-3h4" stroke="#3282c4" fill="none" /><path fill="#b4b8ba" d="M4 17l6-1v11l-6-2zM13 21h9l3 5H11z" /></svg></button>
      <button class="run" aria-label="Clock"><svg viewBox="0 0 32 32"><circle cx="16" cy="16" r="13" fill="#e8eff5" stroke="#97a0a8" stroke-width="2" /><path fill="#efd08a" d="M16 16V4a12 12 0 0 1 12 12z" /><path d="M16 6v10h8" stroke="#444" fill="none" /></svg></button>
      <button aria-label="Chrome"><svg viewBox="0 0 32 32"><circle cx="16" cy="16" r="13" fill="#fbc116" /><path fill="#e33b2e" d="M16 16L4.700 9.500A13 13 0 0 1 27.300 9.500H16z" /><path fill="#2ba24c" d="M4.700 9.500A13 13 0 0 0 15 29l6-11-10 0z" /><circle cx="16" cy="16" r="6" fill="#fff" /><circle cx="16" cy="16" r="5" fill="#4285f4" /></svg></button>
      <button aria-label="Data tools"><svg viewBox="0 0 32 32"><path fill="#f5bb25" d="M7 5c0-3 14-3 14 0v15c0 3-14 3-14 0z" /><ellipse cx="14" cy="5" rx="7" ry="2" fill="#ffe28a" /><path d="M4 22v7h6M22 4h7v7" stroke="#4eb54a" stroke-width="2" fill="none" /><path d="M15 16l11 11M26 16l-11 11" stroke="#2a7fc9" stroke-width="3" /></svg></button>
      <button aria-label="Network"><svg viewBox="0 0 32 32"><circle cx="12" cy="11" r="9" fill="#2b87d3" /><path fill="#60b646" d="M6 7l7-4 4 6-6 6-5-3z" /><path fill="#f0cf3c" d="M3 3l8 2-4 6z" /><path fill="#a9b2b9" d="M13 15l7-3v15l-7-2z" /><path fill="#d5dbdf" d="M20 11l8 2v14l-8 2z" /></svg></button>
      <button aria-label="Toolbox"><svg viewBox="0 0 32 32"><path fill="#f0f0f0" d="M5 2h19v23H5z" /><path fill="#4a5a70" d="M5 2h19v3H5z" /><path d="M8 9h3M8 13h3M8 17h3M13 9h9" stroke="#8493a8" stroke-width="2" /><path fill="#d42a22" d="M6 17h22v11H6z" /><path d="M13 17v-3h8v3" stroke="#b01a12" stroke-width="2" fill="none" /><path d="M6 21h22" stroke="#7c120d" /></svg></button>
      <button class="run live" aria-label="NinjaTrader 8"><svg viewBox="0 0 32 32"><path fill="#75655c" d="M14 4c-10 1-13 10-9 20 1-8 5-11 7-9l3-4z" /><path fill="#a89a90" d="M14 8c3 6 2 11-3 16 7-3 8-10 7-15z" /><path fill="#d6231f" d="M20 3c7 4 10 11 8 17l-5-3c1-5 0-10-3-14z" /><path fill="#8c1713" d="M19 9c2 6 1 12-4 18l6-4 1-8z" /><text x="19" y="27" font-size="15" font-weight="700" fill="#fff">8</text></svg></button>
      <div class="tray">
        <svg viewBox="0 0 24 24"><path d="M6 15l6-6l6 6" /></svg>
        <svg viewBox="0 0 24 24"><path d="M7 18a3 3 0 0 1 0-7a5 5 0 0 1 9-1a4 4 0 0 1 3 8z" fill="#1f8fe0" stroke="none" /></svg>
        <svg viewBox="0 0 24 24"><path d="M8 6h12v9H10M12 19h7M15 15v4M5 5h3v4H5zM6 9v10" /></svg>
        <svg viewBox="0 0 24 24"><path d="M4 9h3l4-4v14l-4-4H4zM14 9c1 2 1 4 0 6M16 7c2 3 2 7 0 10M18 5c3 4 3 10 0 14" /></svg>
        <div class="clock"><span>8:40 AM</span><span>3/20/2021</span></div>
        <button class="action" aria-label="Notifications"><svg viewBox="0 0 28 28"><path fill="#fff" stroke="none" d="M4 5h16v13H10v4l-4-4H4z" /><path d="M7 9h10M7 12h10M7 15h7" stroke="#000" /><circle cx="20" cy="20" r="7" fill="#333" stroke="#888" /><text x="17" y="24" font-size="12" fill="#fff" stroke="none">1</text></svg></button>
      </div>
    </footer>
  </div>
</template>

<style>
body { background: #000; }
</style>

<style scoped>
.screen { position: relative; display: flex; flex-direction: column; min-height: 100vh; background: #2d2d30; font-family: "Liberation Sans", Arial, sans-serif; color: #ccc; overflow: hidden; }
button { border: 0; padding: 0; margin: 0; background: none; color: inherit; font-family: inherit; display: flex; align-items: center; justify-content: center; }
.toolbar { box-sizing: border-box; height: 25px; border-top: 1px solid #3f3f46; border-bottom: 1px solid #3f3f46; background: #1e1e1e; display: flex; align-items: center; padding: 0 4px 0 1px; }
.menu { width: 48px; height: 23px; background: linear-gradient(#ad2228, #6f1519); color: #fff; font-size: 15px; margin-right: 18px; }
.pick { position: relative; margin-right: 7px; }
.pick select { appearance: none; display: block; width: 124px; height: 19px; border: 0; border-radius: 0; background: #3f3f46; color: #ccc; font: 12px "Liberation Sans", Arial, sans-serif; padding: 0 6px; }
.pick svg { position: absolute; right: 6px; top: 6px; width: 10px; height: 8px; fill: none; stroke: #ccc; stroke-width: 2; pointer-events: none; }
.tools { display: flex; gap: 6px; margin-left: 2px; }
.tools button { width: 22px; height: 22px; }
.tools svg { width: 22px; height: 22px; fill: none; stroke: #ccc; }
.tools .heavy { stroke-width: 3; }
.tools button:nth-child(8) .heavy { stroke-width: 2; }
.tools .off { opacity: .45; }
.wins { margin-left: auto; display: flex; gap: 3px; }
.wins button { box-sizing: border-box; width: 16px; height: 16px; border: 1px solid #777; background: linear-gradient(#444, #0a0a0a); }
.wins .blank { background: linear-gradient(#c8c4c4, #a49f9f); border-color: #8c8888; }
.wins .shut { background: linear-gradient(#b04048, #8a1018); }
.wins svg { width: 14px; height: 14px; fill: none; stroke: #fff; }

.remote { position: absolute; top: 0; left: 50%; width: 573px; height: 26px; transform: translateX(-298px); }
.shape { position: absolute; width: 100%; height: 100%; }
.remote-row { position: relative; display: flex; align-items: center; height: 24px; padding: 0 34px 0 29px; gap: 11px; font: 11px "Open Sans", sans-serif; color: #dce6f2; }
.remote-row span { flex: 1; text-align: center; padding-left: 24px; }
.remote-row svg:not(.shape) { width: 12px; height: 12px; fill: none; stroke: #fff; }
.remote-row .pin { width: 22px; height: 22px; background: #1159a0; margin-right: -6px; }
.remote-row .pin svg { width: 18px; height: 18px; }
.remote-row .sig { height: 14px; }

.frame { margin: 7px 8px 0; outline: 1px solid #3f3f46; background: #222; }
.panel { display: block; width: 100%; height: auto; font-size: 11px; }
.panel text { font-family: "Liberation Sans", Arial, sans-serif; }
.crisp, .bars, .steps { shape-rendering: crispEdges; }
.lv { fill: none; }
.sea { stroke: #2e8b57; stroke-dasharray: 4 3; }
.coral { stroke: #ffa07a; stroke-dasharray: 4 3; }
.blue { stroke: #00f; stroke-width: 2; stroke-dasharray: 3 4; }
.mid { stroke: #000; stroke-width: 2; stroke-dasharray: 3 4; }
.stop { stroke: #f00; stroke-width: 3; stroke-dasharray: 3 4; }
.ttl { fill: #c8c8c8; }
.curve { fill: none; stroke-width: 1; stroke-dasharray: 4 1; opacity: .85; }
.bars { fill: none; stroke-width: 2; }
.steps { fill: none; stroke-width: 5; stroke-linecap: square; }
.box { fill: none; stroke-width: 2; shape-rendering: crispEdges; }
.orders text { fill: #fff; font-size: 10px; font-weight: 700; }
.orders .pnl { fill: #32cd32; font-size: 11px; font-weight: 400; }
.orders .qty { font-size: 11px; font-weight: 400; }
.tip { fill: #000; font-size: 12px; }
.note { font-size: 32px; text-anchor: middle; filter: drop-shadow(2px 3px 2px rgba(0, 0, 0, .5)); }
.fib { font-size: 21px; filter: drop-shadow(2px 3px 2px rgba(0, 0, 0, .5)); }
.axis text, .lite { fill: #ccc; }
.axis.tag text { fill: #fff; stroke: #fff; stroke-width: .2; }
.panel .dark { fill: #000; }
.fix { fill: #ccc; font-size: 14px; }
.time text { fill: #ccc; text-anchor: middle; }

.scroll { display: flex; height: 14px; background: #333; padding: 0 1px; align-items: center; }
.scroll button { width: 9px; height: 12px; background: #000; }
.scroll svg { width: 9px; height: 12px; fill: #fff; }
.track { flex: 1; }
.thumb { box-sizing: border-box; width: 49px; height: 14px; border: 1px solid #777; background: linear-gradient(#555, #333); margin-right: 1px; }

.tabs { display: flex; height: 32px; flex: 1; align-items: flex-start; padding-left: 27px; }
.tab { height: 21px; width: 149px; margin: 1px 1px 0 0; background: #3f3f46; font-size: 13px; color: #ccc; padding-right: 10px; }
.tab.on { box-sizing: border-box; width: 151px; height: 25px; margin: 0; background: #1e1e1e; border: 1px solid #0f74c4; border-top: 0; color: #0f74c4; padding: 0 8px 2px 0; }
.tab.add { width: 22px; padding: 0; }
.tab.add svg { width: 12px; height: 12px; stroke: #ddd; stroke-width: 2; }

.taskbar { display: flex; height: 40px; background: #02040a; }
.taskbar > button { box-sizing: border-box; width: 49px; height: 40px; }
.taskbar > button svg { width: 26px; height: 26px; }
.taskbar > .run { border-bottom: 3px solid #76b9ed; margin: 0 4px; width: 41px; padding-top: 3px; }
.taskbar > .live { width: 48px; background: #383a3e; margin: 0 4px 0 0; }
.tray { margin-left: auto; display: flex; align-items: center; padding-right: 13px; }
.tray svg { width: 24px; height: 24px; fill: none; stroke: #fff; }
.clock { display: flex; flex-direction: column; align-items: center; width: 64px; margin-left: 6px; font: 11px/18px "Open Sans", sans-serif; color: #fff; }
.action { margin-left: 3px; width: 38px; height: 40px; }
.action svg { width: 28px; height: 28px; }
</style>
